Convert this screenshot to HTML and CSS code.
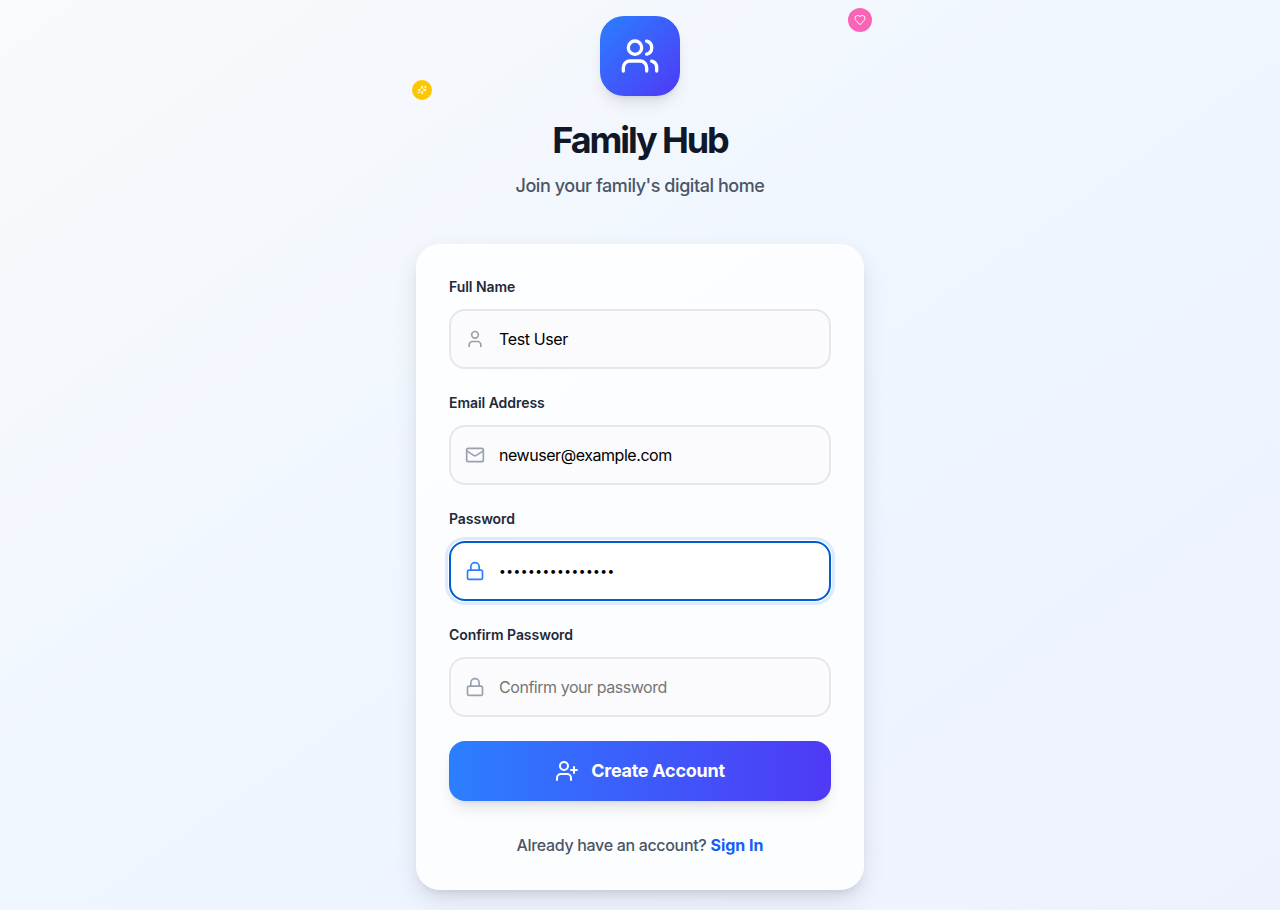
FILE: index.html
```html
<!DOCTYPE html>
<html lang="en">
<head>
<meta charset="utf-8">
<title>Family Hub</title>
<link rel="stylesheet" href="styles.css">
</head>
<body>
<main class="page">
  <header class="header">
    <div class="logo">
      <svg class="icon" width="40" height="40" viewBox="0 0 24 24"><path d="M16 21v-2a4 4 0 0 0-4-4H6a4 4 0 0 0-4 4v2"/><circle cx="9" cy="7" r="4"/><path d="M22 21v-2a4 4 0 0 0-3-3.87"/><path d="M16 3.13a4 4 0 0 1 0 7.75"/></svg>
    </div>
    <span class="badge badge-heart">
      <svg class="icon" width="12" height="12" viewBox="0 0 24 24"><path d="M19 14c1.49-1.46 3-3.21 3-5.5A5.5 5.5 0 0 0 16.5 3c-1.76 0-3 .5-4.5 2-1.500-1.500-2.740-2-4.500-2A5.500 5.500 0 0 0 2 8.500c0 2.300 1.500 4.050 3 5.500l7 7Z"/></svg>
    </span>
    <span class="badge badge-sparkle">
      <svg class="icon" width="10" height="10" viewBox="0 0 24 24"><path d="M9.937 15.500A2 2 0 0 0 8.500 14.063l-6.135-1.582a.5.5 0 0 1 0-.962L8.500 9.936A2 2 0 0 0 9.937 8.500l1.582-6.135a.5.5 0 0 1 .963 0L14.063 8.500A2 2 0 0 0 15.500 9.937l6.135 1.581a.5.5 0 0 1 0 .964L15.500 14.063a2 2 0 0 0-1.437 1.437l-1.582 6.135a.5.5 0 0 1-.963 0z"/><path d="M20 3v4M22 5h-4M4 17v2M5 18H3"/></svg>
    </span>
    <h1 class="title">Family Hub</h1>
    <p class="subtitle">Join your family's digital home</p>
  </header>
  <form class="card">
    <div class="field">
      <label class="label" for="name">Full Name</label>
      <div class="control">
        <svg class="icon" width="20" height="20" viewBox="0 0 24 24"><path d="M19 21v-2a4 4 0 0 0-4-4H9a4 4 0 0 0-4 4v2"/><circle cx="12" cy="7" r="4"/></svg>
        <input class="input" id="name" type="text" value="Test User">
      </div>
    </div>
    <div class="field">
      <label class="label" for="email">Email Address</label>
      <div class="control">
        <svg class="icon" width="20" height="20" viewBox="0 0 24 24"><rect x="2" y="4" width="20" height="16" rx="2"/><path d="m22 7-8.970 5.700a1.940 1.940 0 0 1-2.060 0L2 7"/></svg>
        <input class="input" id="email" type="email" value="newuser@example.com">
      </div>
    </div>
    <div class="field">
      <label class="label" for="password">Password</label>
      <div class="control control-active">
        <svg class="icon" width="20" height="20" viewBox="0 0 24 24"><rect x="3" y="11" width="18" height="11" rx="2"/><path d="M7 11V7a5 5 0 0 1 10 0v4"/></svg>
        <input class="input input-masked" id="password" type="password" value="SecurePassword12">
      </div>
    </div>
    <div class="field">
      <label class="label" for="confirm">Confirm Password</label>
      <div class="control">
        <svg class="icon" width="20" height="20" viewBox="0 0 24 24"><rect x="3" y="11" width="18" height="11" rx="2"/><path d="M7 11V7a5 5 0 0 1 10 0v4"/></svg>
        <input class="input" id="confirm" type="password" placeholder="Confirm your password">
      </div>
    </div>
    <button class="submit" type="button">
      <svg class="icon" width="24" height="24" viewBox="0 0 24 24"><path d="M16 21v-2a4 4 0 0 0-4-4H6a4 4 0 0 0-4 4v2"/><circle cx="9" cy="7" r="4"/><path d="M19 8v6M22 11h-6"/></svg>
      <span>Create Account</span>
    </button>
    <p class="signin">Already have an account? <a class="link" href="#">Sign In</a></p>
  </form>
</main>
</body>
</html>
```
FILE: styles.css
```css
* { box-sizing: border-box; }
body {
  margin: 0;
  font-family: Inter, "Liberation Sans", sans-serif;
  font-size: 16px;
  line-height: 24px;
}
.page {
  min-height: 910px;
  display: flex;
  flex-direction: column;
  align-items: center;
  padding: 16px 0 20px;
  background: linear-gradient(to bottom right, #f9fafb, #eff6ff 50%, #eef2ff);
}
.icon {
  display: block;
  flex-shrink: 0;
  fill: none;
  stroke: currentColor;
  stroke-width: 2;
  stroke-linecap: round;
  stroke-linejoin: round;
}
.header {
  position: relative;
  width: 448px;
  display: flex;
  flex-direction: column;
  align-items: center;
  margin-bottom: 44px;
}
.logo {
  width: 80px;
  height: 80px;
  display: grid;
  place-items: center;
  margin-bottom: 24px;
  border-radius: 24px;
  color: #fff;
  background: linear-gradient(to bottom right, #2b7fff, #4f39f6);
  box-shadow: 0 10px 15px -3px rgb(0 0 0 / .1), 0 4px 6px -4px rgb(0 0 0 / .1);
}
.badge {
  position: absolute;
  display: grid;
  place-items: center;
  border-radius: 50%;
  color: #fff;
}
.badge-heart { top: -8px; right: -8px; width: 24px; height: 24px; background: #fb64b6; }
.badge-sparkle { top: 64px; left: -4px; width: 20px; height: 20px; background: #fdc700; }
.title {
  margin: 0 0 12px;
  font-size: 36px;
  line-height: 40px;
  font-weight: 750;
  letter-spacing: -2.1px;
  color: #101828;
}
.subtitle {
  margin: 0;
  font-size: 18px;
  line-height: 28px;
  font-weight: 500;
  letter-spacing: -0.44px;
  color: #4a5565;
}
.card {
  width: 448px;
  padding: 33px;
  display: flex;
  flex-direction: column;
  gap: 24px;
  border-radius: 24px;
  background: rgb(255 255 255 / .8);
  box-shadow: 0 10px 24px -1px rgb(0 0 0 / .11), 0 7px 10px -5px rgb(0 0 0 / .1);
}
.field { display: flex; flex-direction: column; gap: 12px; }
.label { font-size: 14px; line-height: 20px; font-weight: 600; letter-spacing: -0.05px; color: #1e2939; }
.control {
  display: flex;
  align-items: center;
  gap: 14px;
  height: 60px;
  padding: 0 14px;
  border: 2px solid #e5e7eb;
  border-radius: 16px;
  background: #fbfbfd;
  color: #99a1af;
}
.control-active {
  border-color: #005fcc;
  background: #fff;
  color: #2b7fff;
  box-shadow: 0 0 0 1px #fff, 0 0 0 4px #dbeafe;
}
.input {
  flex: 1;
  min-width: 0;
  height: 24px;
  padding: 0;
  border: 0;
  outline: 0;
  background: transparent;
  color: #000;
  font: inherit;
  letter-spacing: -0.45px;
}
#name { letter-spacing: -0.38px; }
.input-masked { font-size: 12px; letter-spacing: 0.49px; }
.input::placeholder { color: #757575; }
.submit {
  height: 60px;
  display: flex;
  align-items: center;
  justify-content: center;
  gap: 12px;
  padding: 0;
  border: 0;
  border-radius: 16px;
  color: #fff;
  font: 700 18px/28px Inter, "Liberation Sans", sans-serif;
  letter-spacing: -0.26px;
  background: linear-gradient(to right, #2b7fff, #4f39f6);
  box-shadow: 0 10px 15px -3px rgb(0 0 0 / .1), 0 4px 6px -4px rgb(0 0 0 / .1);
}
.signin { margin: 8px 0 0; text-align: center; font-weight: 500; letter-spacing: -0.32px; color: #4a5565; }
.link { color: #155dfc; font-weight: 700; letter-spacing: 0; text-decoration: none; }
```
